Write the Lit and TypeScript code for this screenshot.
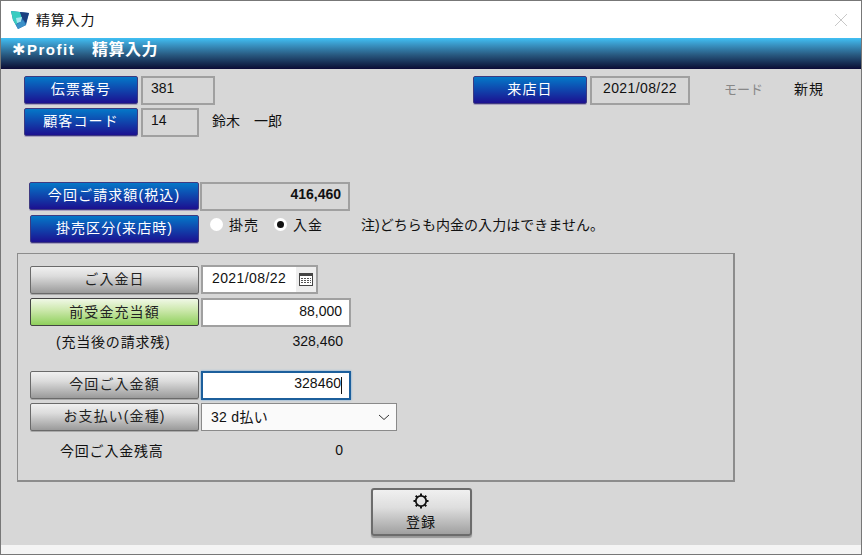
import { LitElement, html, css } from "lit";
import { customElement } from "lit/decorators.js";

@customElement("app-root")
export class AppRoot extends LitElement {
  static styles = css`
    :host { display: block; width: 862px; height: 555px; font-family: "Liberation Sans", "Noto Sans CJK JP", sans-serif; font-size: 14px; color: #111; overflow: hidden; }
    * { box-sizing: border-box; }
    .win { width: 862px; height: 555px; display: flex; flex-direction: column; border: 1px solid #777; background: #f4f4f4; }
    .titlebar { height: 37px; background: #fff; display: flex; align-items: center; padding: 0 13px 0 9px; gap: 6px; font-size: 14px; flex: none; }
    .titlebar span { letter-spacing: 0.8px; padding-bottom: 2px; }
    .close { margin-left: auto; display: flex; }
    .header { height: 31px; flex: none; background: linear-gradient(#40c0f4 0%, #3a98c8 20%, #28587f 55%, #0f1a40 92%, #0c0a38 100%); color: #fff; font-size: 16px; font-weight: bold; padding: 1px 0 0 11px; line-height: 22px; display: flex; letter-spacing: 0.5px; }
    .header .ast { font-size: 16px; width: 15px; font-family: "DejaVu Sans", sans-serif; letter-spacing: 0; }
    .header .p { font-size: 15px; letter-spacing: 1.5px; width: 65px; }
    .content { height: 476px; flex: none; background: #d7d7d7; display: flex; flex-direction: column; }
    .row { display: flex; align-items: flex-start; }
    .btn { display: flex; align-items: center; justify-content: center; border-radius: 2px; font-size: 14px; height: 28px; letter-spacing: 1.1px; flex: none; padding-bottom: 5px; }
    .blue { background: linear-gradient(#0478c8, #1c1090); color: #fff; border: 1px solid #3e3a80; box-shadow: 0 1px 0 #a8a0c0; }
    .gray { background: linear-gradient(#f0f0f0, #dcdcdc 35%, #9a9a9a); color: #222; border: 1px solid #6a6a6a; box-shadow: 0 1px 0 #aaa; }
    .green { background: linear-gradient(#f0f8e6, #cfe9b0 40%, #8fd05c); color: #222; border: 1px solid #444; padding-bottom: 3px; }
    .field { height: 29px; border: 2px solid #a0a0a0; display: flex; align-items: center; padding: 0 8px 5px; font-size: 14px; flex: none; background: #d7d7d7; }
    .right { justify-content: flex-end; }
    .top1 { padding: 7px 0 0 23px; }
    .w114 { width: 114px; }
    .gap3 { margin-left: 3px; }
    .f74 { width: 74px; }
    .f58 { width: 58px; }
    .date { width: 114px; margin-left: 258px; }
    .f100 { width: 100px; justify-content: center; padding: 0 0 5px; letter-spacing: 0.4px; }
    .mode { color: #888; margin-left: 34px; font-size: 13px; align-self: center; padding-bottom: 5px; }
    .new { margin-left: 31px; letter-spacing: 1px; align-self: center; padding-bottom: 5px; }
    .name { margin-left: 13px; align-self: center; padding-bottom: 5px; }
    .r2 { padding: 3px 0 0 23px; }
    .r3 { padding: 45px 0 0 28px; }
    .bill { width: 170px; height: 28px; }
    .total { width: 150px; height: 29px; font-weight: bold; justify-content: flex-end; padding-right: 7px; margin-left: 1px; }
    .r4 { padding: 4px 0 0 29px; height: 32px; }
    .kake { width: 169px; }
    .radios { display: flex; align-items: center; margin-left: 11px; height: 18px; letter-spacing: 1px; }
    .radio { width: 13px; height: 13px; border-radius: 50%; background: #fff; display: flex; align-items: center; justify-content: center; margin-right: 6px; flex: none; }
    .radio i { width: 7px; height: 7px; background: #111; border-radius: 50%; display: block; }
    .second { margin-left: 15px; }
    .note { margin-left: 38px; letter-spacing: 0.05px; }
    .panel { margin: 10px 0 0 16px; width: 718px; height: 229px; border: 2px solid #8c8c8c; border-width: 1px 2px 2px 1px; padding: 11px 0 0 12px; display: flex; flex-direction: column; }
    .pbtn { width: 169px; }
    .first .pbtn { margin-top: 1px; }
    .ml2 { margin-left: 2px; }
    .dfield { width: 117px; background: #fff; border: 2px solid #a0a0a0; height: 29px; display: flex; justify-content: space-between; padding: 0 0 0 9px; flex: none; letter-spacing: 0.4px; }
    .dfield span { line-height: 23px; }
    .cal { width: 20px; height: 25px; background: #eee; display: flex; align-items: center; justify-content: center; }
    .rowgap { margin-top: 4px; }
    .rowgap .field { padding-bottom: 3px; }
    .sel { margin-top: 3px; }
    .amt { width: 150px; height: 29px; background: #fff; border: 2px solid #a0a0a0; padding-right: 7px; }
    .text { height: 22px; margin-top: 3px; align-items: center; }
    .t1 { width: 170px; padding-left: 26px; letter-spacing: 0.8px; }
    .val { width: 143px; text-align: right; }
    .focus { border: 2px solid #1c5f9c; box-shadow: 0 0 2px #6ba4d8; }
    .caret { width: 1px; height: 17px; background: #111; flex: none; margin-bottom: -5px; }
    .gapped { margin-top: 19px; }
    .select { width: 196px; height: 28px; background: #fafafa; border: 1px solid #8a8a8a; display: flex; align-items: center; justify-content: space-between; padding: 0 6px 0 9px; margin-left: 2px; }
    .select span { padding-bottom: 3px; letter-spacing: 0.3px; }
    .last { margin-top: 8px; }
    .t2 { width: 170px; padding-left: 30px; letter-spacing: 0.8px; }
    .foot { display: flex; justify-content: center; padding: 6px 20px 0 0; }
    .save { width: 101px; height: 48px; border-radius: 3px; border: 2px solid #6c6c6c; background: linear-gradient(#f0f0f0, #dedede 40%, #a0a0a0); display: flex; flex-direction: column; align-items: center; padding-top: 2px; line-height: 18px; letter-spacing: 1px; box-shadow: 0 2px 1px #999; }
    .save span { margin-top: 3px; }
  `;

  render() {
    return html`<div class="win">
      <div class="titlebar">
        <svg width="20" height="20" viewBox="0 0 20 20">
          <path d="M1 1 L19 3 L16 15 L8 19 L3 10 Z" fill="#2468a8"/>
          <path d="M1 1 L10 2 L12 8 L6 15 L3 10 Z" fill="#38ccc0"/>
          <path d="M10 2 L19 3 L16 13 L12 8 Z" fill="#1a3f80"/>
          <path d="M6 8 L12 7 L11 12 L7 13 Z" fill="#a4e6ee"/>
          <path d="M6 15 L13 10 L16 15 L8 19 Z" fill="#3b90c8"/>
        </svg>
        <span>精算入力</span>
        <div class="close"><svg width="14" height="14" viewBox="0 0 14 14"><path d="M1 1 L13 13 M13 1 L1 13" stroke="#c8c8c8" stroke-width="1" fill="none"/></svg></div>
      </div>
      <div class="header"><span class="ast">✱</span><span class="p">Profit</span><span>精算入力</span></div>
      <div class="content">
        <div class="row top1">
          <div class="btn blue w114">伝票番号</div>
          <div class="field f74 gap3">381</div>
          <div class="btn blue date">来店日</div>
          <div class="field f100 gap3">2021/08/22</div>
          <div class="mode">モード</div>
          <div class="new">新規</div>
        </div>
        <div class="row r2">
          <div class="btn blue w114">顧客コード</div>
          <div class="field f58 gap3">14</div>
          <div class="name">鈴木　一郎</div>
        </div>
        <div class="row r3">
          <div class="btn blue bill">今回ご請求額(税込)</div>
          <div class="field total">416,460</div>
        </div>
        <div class="row r4">
          <div class="btn blue kake">掛売区分(来店時)</div>
          <div class="radios">
            <div class="radio"></div><span>掛売</span>
            <div class="radio second"><i></i></div><span>入金</span>
            <span class="note">注)どちらも内金の入力はできません。</span>
          </div>
        </div>
        <div class="panel">
          <div class="row first">
            <div class="btn gray pbtn">ご入金日</div>
            <div class="dfield ml2"><span>2021/08/22</span>
              <div class="cal"><svg width="14" height="13" viewBox="0 0 14 13"><rect x=".5" y=".5" width="13" height="12" fill="#fff" stroke="#444"/><rect x="0" y="0" width="14" height="3" fill="#444"/><path d="M2 5.5h2M5 5.5h2M8 5.5h2M11 5.5h1M2 7.5h2M5 7.5h2M8 7.5h2M11 7.5h1M2 9.5h2M5 9.5h2M8 9.5h2M11 9.5h1" stroke="#555" stroke-width="1"/></svg></div>
            </div>
          </div>
          <div class="row rowgap">
            <div class="btn green pbtn">前受金充当額</div>
            <div class="field amt right ml2">88,000</div>
          </div>
          <div class="row text">
            <div class="t1">(充当後の請求残)</div>
            <div class="val">328,460</div>
          </div>
          <div class="row gapped">
            <div class="btn gray pbtn">今回ご入金額</div>
            <div class="field amt right ml2 focus">328460<span class="caret"></span></div>
          </div>
          <div class="row sel">
            <div class="btn gray pbtn">お支払い(金種)</div>
            <div class="select"><span>32 d払い</span>
              <svg width="12" height="6" viewBox="0 0 12 6"><path d="M1 1 L6 5.5 L11 1" stroke="#333" stroke-width="1" fill="none"/></svg>
            </div>
          </div>
          <div class="row text last">
            <div class="t2">今回ご入金残高</div>
            <div class="val">0</div>
          </div>
        </div>
        <div class="foot">
          <div class="save">
            <svg width="18" height="18" viewBox="0 0 18 18"><circle cx="9" cy="9" r="5.2" fill="none" stroke="#111" stroke-width="1.8"/><path d="M9 1.5V4M9 14V16.5M1.5 9H4M14 9H16.5M3.7 3.7L5.4 5.4M12.6 12.6L14.3 14.3M14.3 3.7L12.6 5.4M5.4 12.6L3.7 14.3" stroke="#111" stroke-width="2"/></svg>
            <span>登録</span>
          </div>
        </div>
      </div>
    </div>`;
  }
}
